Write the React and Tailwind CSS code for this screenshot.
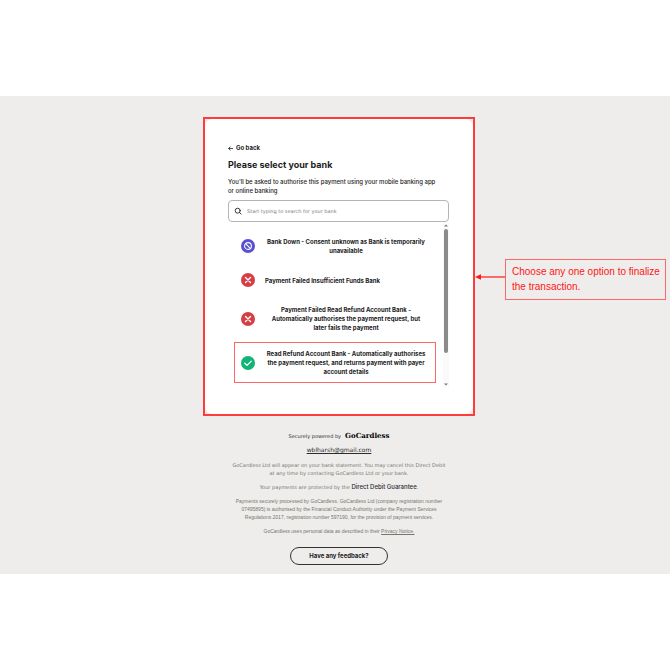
import React from 'react';

function Disc({ kind }) {
  const fill = kind === 'down' ? '#5a4fcf' : kind === 'fail' ? '#d43f45' : '#12b376';
  return (
    <svg className="size-[14px] shrink-0" viewBox="0 0 14 14" fill="none" stroke="#fff" strokeLinecap="round" aria-hidden="true">
      <circle cx="7" cy="7" r="7" fill={fill} stroke="none" />
      {kind === 'down' && (
        <>
          <circle cx="7" cy="7" r="3.4" strokeWidth="1.1" />
          <path d="M4.7 4.7l4.6 4.6" strokeWidth="1.1" />
        </>
      )}
      {kind === 'fail' && <path d="M4.5 4.5l5 5M9.5 4.5l-5 5" strokeWidth="1.4" />}
      {kind === 'ok' && <path d="M3.8 7.3l2.2 2.1 4.3-4.3" strokeWidth="1.3" strokeLinejoin="round" />}
    </svg>
  );
}

const banks = [
  { kind: 'down', name: 'Bank Down - Consent unknown as Bank is temporarily unavailable' },
  { kind: 'fail', name: 'Payment Failed Insufficient Funds Bank' },
  { kind: 'fail', name: 'Payment Failed Read Refund Account Bank - Automatically authorises the payment request, but later fails the payment' },
  { kind: 'ok', name: 'Read Refund Account Bank - Automatically authorises the payment request, and returns payment with payer account details', marked: true },
];

function BankRow({ kind, name, marked }) {
  return (
    <li className={marked ? 'mt-px border border-[#ff6666]' : ''}>
      <button
        type="button"
        className={
          'flex w-full items-center gap-2 text-center text-[6px] leading-[9px] font-bold ' +
          (marked ? 'px-[6px] py-[6px]' : 'px-[7px] py-[9px]')
        }
      >
        <Disc kind={kind} />
        <span className="px-[2px]">{name}</span>
      </button>
    </li>
  );
}

function Scrollbar() {
  return (
    <div className="flex w-[6px] flex-col items-center bg-[#fafafa] py-[2px]" aria-hidden="true">
      <svg className="h-[3px] w-1" viewBox="0 0 4 3"><path d="M2 0.5L4 2.5H0z" fill="#777" /></svg>
      <div className="mt-[2px] h-[124px] w-1 rounded-full bg-[#8b8b8b]" />
      <svg className="mt-auto h-[3px] w-1" viewBox="0 0 4 3"><path d="M2 2.5L4 0.5H0z" fill="#777" /></svg>
    </div>
  );
}

function Note() {
  return (
    <div className="absolute top-[140px] left-full ml-[2px] flex items-start">
      <svg className="mt-[15px] h-[6px] w-[30px]" viewBox="0 0 30 6" aria-hidden="true">
        <path d="M4 3h26" stroke="#ff1616" strokeWidth="1.2" />
        <path d="M0 3l6-2.8v5.6z" fill="#ff1616" />
      </svg>
      <p className="w-[161px] border border-[#ff6666] pt-1 pr-[2px] pb-[5px] pl-[6px] font-['Liberation_Sans',Arial,sans-serif] text-[10px] leading-[15px] text-[#ff1616]">
        Choose any one option to finalize the transaction.
      </p>
    </div>
  );
}

function BankCard() {
  return (
    <section className="relative border-2 border-[#ff3b3b] bg-[#eeedeb]">
      <div className="rounded-lg bg-white pt-[25px] pr-[24px] pb-[26px] pl-[23px]">
        <button type="button" className="flex items-center gap-[3px] text-[6px] leading-[8px] font-bold">
          <svg className="size-[5px]" viewBox="0 0 5 5" fill="none" stroke="currentColor" strokeWidth="0.8" aria-hidden="true">
            <path d="M5 2.5H0.6M2.4 0.6L0.6 2.5l1.8 1.9" />
          </svg>
          Go back
        </button>
        <h1 className="mt-[7px] text-[9px] leading-[12px] font-bold">Please select your bank</h1>
        <p className="mt-[6px] text-[6px] leading-[9px] font-medium">
          You'll be asked to authorise this payment using your mobile banking app<br />or online banking
        </p>
        <label className="mt-[5px] flex h-[22px] items-center gap-[5px] rounded-[4px] border border-[#b5b5b3] px-[5px]">
          <svg className="size-2 shrink-0" viewBox="0 0 8 8" fill="none" stroke="#222" strokeWidth="0.9" strokeLinecap="round" aria-hidden="true">
            <circle cx="3.7" cy="3.7" r="2.5" />
            <path d="M5.6 5.6l1.5 1.5" />
          </svg>
          <input
            type="text"
            aria-label="Search for your bank"
            placeholder="Start typing to search for your bank"
            className="min-w-0 flex-1 font-['DejaVu_Sans',sans-serif] text-[5px] leading-[8px] outline-none placeholder:text-[#7c7c7a]"
          />
        </label>
        <div className="flex h-[166px] justify-between">
          <ul className="ml-[6px] w-[202px] pt-[6px]">
            {banks.map((b) => <BankRow key={b.name} {...b} />)}
          </ul>
          <Scrollbar />
        </div>
      </div>
      <Note />
    </section>
  );
}

function Footer() {
  return (
    <footer className="flex flex-col items-center text-center font-['DejaVu_Sans',sans-serif] text-[5px] leading-[8px] text-[#77756f]">
      <p className="mt-4 flex items-center gap-[4px] text-[#2b2b2b]">
        Securely powered by
        <strong className="font-['DejaVu_Serif',serif] text-[7px] text-black">GoCardless</strong>
      </p>
      <a href="mailto:wblharsh@gmail.com" className="mt-[6px] text-[6px] text-[#2b2b2b] underline">wblharsh@gmail.com</a>
      <p className="mt-[7px]">
        GoCardless Ltd will appear on your bank statement. You may cancel this Direct Debit<br />at any time by contacting GoCardless Ltd or your bank.
      </p>
      <p className="mt-[6px]">
        Your payments are protected by the <a href="#guarantee" className="font-['Inter',sans-serif] text-[6px] font-medium text-[#2b2b2b]">Direct Debit Guarantee</a>.
      </p>
      <p className="mt-[6px] w-[212px] font-['Liberation_Sans',Arial,sans-serif]">
        Payments securely processed by GoCardless. GoCardless Ltd (company registration number 07495895) is authorised by the Financial Conduct Authority under the Payment Services Regulations 2017, registration number 597190, for the provision of payment services.
      </p>
      <p className="mt-[6px] font-['Liberation_Sans',Arial,sans-serif]">
        GoCardless uses personal data as described in their <a href="#privacy" className="underline">Privacy Notice.</a>
      </p>
      <button type="button" className="mt-[12px] h-[18px] w-[98px] rounded-full border border-[#333] font-['Inter',sans-serif] text-[6px] font-bold text-[#1c1c1c]">
        Have any feedback?
      </button>
    </footer>
  );
}

export default function App() {
  return (
    <div className="min-h-screen bg-white pt-24 font-['Inter',sans-serif] text-[#1c1c1c]">
      <main className="flex justify-center bg-[#eeedeb] pt-[21px] pb-[9px] pl-2">
        <div className="w-[272px]">
          <BankCard />
          <Footer />
        </div>
      </main>
    </div>
  );
}
